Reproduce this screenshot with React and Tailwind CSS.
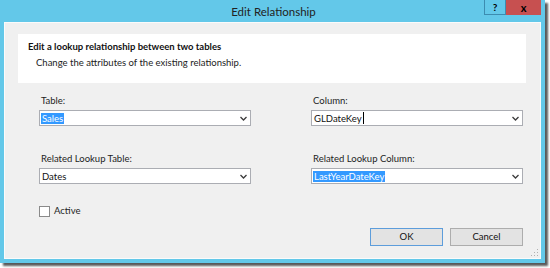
import React from 'react';

function Chevron() {
  return (
    <svg width="7" height="5" viewBox="0 0 7 5" className="shrink-0">
      <path d="M0.5 1 L3.5 4 L6.5 1" fill="none" stroke="#3c3c3c" strokeWidth="1.3" />
    </svg>
  );
}

function Combo({ value, selected, caret }) {
  return (
    <div className="h-[16px] w-[212px] bg-white border border-[#abadb3] flex items-center justify-between pl-[1px] pr-[3px]">
      <div className="flex items-center h-full">
        <span
          className={
            selected
              ? 'bg-[#3399ff] text-white leading-[11px] h-[11px] px-[1px]'
              : 'text-[#111] leading-[11px] px-[1px]'
          }
        >
          {value}
        </span>
        {caret && <span className="w-px h-[12px] bg-black" />}
      </div>
      <Chevron />
    </div>
  );
}

function Field({ label, ...rest }) {
  return (
    <div className="flex flex-col">
      <div className="h-[13px] leading-[13px] mb-[3px] pl-[2px] text-[#1e1e1e]">{label}</div>
      <Combo {...rest} />
    </div>
  );
}

export default function App() {
  return (
    <div
      className="w-[550px] h-[268px] bg-white overflow-hidden text-[9.5px]"
      style={{ fontFamily: 'Lato, "Open Sans", sans-serif' }}
    >
      {/* Window frame */}
      <div className="w-[545px] h-[263px] bg-[#63c8e9] flex flex-col px-[4px] pb-[4px] shadow-[3px_3px_2px_rgba(0,0,0,0.65)]">
        {/* Title bar */}
        <div className="h-[22px] relative flex items-center justify-center">
          <span className="text-[11.5px] text-[#222] pl-[2px] pt-[1px]">Edit Relationship</span>
          <div className="absolute top-0 right-0 flex h-[15px]">
            <div className="w-[22px] h-full border border-t-0 border-[#3c8cb0] bg-[#63c8e9] flex items-center justify-center text-[10px] font-bold text-black">
              ?
            </div>
            <div className="w-[35px] h-full bg-[#c75050] flex items-center justify-center text-[11px] font-bold text-black leading-none">
              x
            </div>
          </div>
        </div>

        {/* Client area */}
        <div className="flex-1 bg-[#f0f0f0] border border-[#fbfbfb] relative flex flex-col">
          {/* Header panel */}
          <div className="mt-[11px] ml-[13px] mr-[14px] h-[49px] bg-white pl-[10px] pt-[6px]">
            <div className="font-bold text-[#111] leading-[13px]">
              Edit a lookup relationship between two tables
            </div>
            <div className="pl-[8px] mt-[3px] text-[#222] leading-[13px]">
              Change the attributes of the existing relationship.
            </div>
          </div>

          {/* Form */}
          <div className="grid grid-cols-[212px_212px] gap-x-[60px] gap-y-[26px] ml-[34px] mt-[11px]">
            <Field label="Table:" value="Sales" selected />
            <Field label="Column:" value="GLDateKey" caret />
            <Field label="Related Lookup Table:" value="Dates" />
            <Field label="Related Lookup Column:" value="LastYearDateKey" selected />
          </div>

          {/* Active */}
          <label className="flex items-center ml-[34px] mt-[22px] h-[11px]">
            <span className="w-[11px] h-[11px] bg-white border border-[#8a8a8a]" />
            <span className="ml-[4px] text-[#1e1e1e]">Active</span>
          </label>

          {/* Buttons */}
          <div className="flex justify-end gap-[7px] mr-[17px] mt-[11px]">
            <button className="w-[73px] h-[18px] bg-[#e3e3e3] border border-[#5d9ddb] text-[#111] leading-none">
              OK
            </button>
            <button className="w-[73px] h-[18px] bg-[#e3e3e3] border border-[#adadad] text-[#111] leading-none">
              Cancel
            </button>
          </div>

          {/* Resize grip */}
          <svg width="8" height="8" viewBox="0 0 8 8" className="absolute right-[1px] bottom-[1px]">
            <rect x="6" y="0" width="1" height="1" fill="#b0b0b0" />
            <rect x="6" y="3" width="1" height="1" fill="#b0b0b0" />
            <rect x="3" y="3" width="1" height="1" fill="#b0b0b0" />
            <rect x="6" y="6" width="1" height="1" fill="#b0b0b0" />
            <rect x="3" y="6" width="1" height="1" fill="#b0b0b0" />
            <rect x="0" y="6" width="1" height="1" fill="#b0b0b0" />
          </svg>
        </div>
      </div>
    </div>
  );
}
